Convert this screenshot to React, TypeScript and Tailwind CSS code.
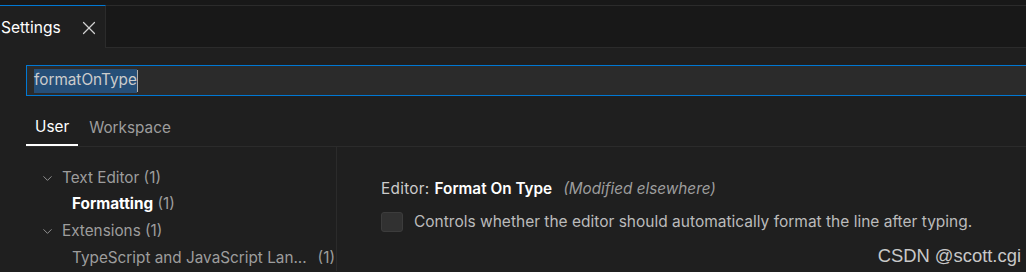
import { ChevronDown, X } from "lucide-react";

const font = { fontFamily: "Inter, 'Noto Sans', sans-serif" };

function TocRow({
  label,
  count,
  level,
  bold,
}: {
  label: string;
  count: string;
  level: number;
  bold?: boolean;
}) {
  return (
    <div className="flex h-[26.6px] items-center pr-[1px] text-[15.3px] text-[#9d9d9d]">
      {level === 0 ? (
        <>
          <ChevronDown className="ml-[14px] mr-[7px] h-[15px] w-[15px] text-[#a0a0a0]" strokeWidth={1.4} />
          <span>
            {label} {count}
          </span>
        </>
      ) : (
        <span className="ml-[46px] flex flex-1 items-center">
          {bold ? (
            <span>
              <span className="font-bold text-white">{label}</span> {count}
            </span>
          ) : (
            <>
              <span className="flex-1">{label}</span>
              <span>{count}</span>
            </>
          )}
        </span>
      )}
    </div>
  );
}

export default function App() {
  return (
    <div className="relative h-[272px] w-[1026px] overflow-hidden bg-[#1f1f1f] text-[#cccccc]" style={font}>
      {/* title strip */}
      <div className="h-[5px] bg-[#181818]" />

      {/* editor tabs */}
      <div className="flex h-[43px] bg-[#181818]">
        <div className="flex w-[106px] items-center border-t border-r border-[#2b2b2b] border-t-[#0078d4] bg-[#1f1f1f] pt-[2px] text-[15.6px] text-white">
          <span className="ml-[1px]">Settings</span>
          <X className="ml-[17px] h-[22px] w-[22px] text-[#d0d0d0]" strokeWidth={1.3} />
        </div>
        <div className="flex-1 border-t border-b border-[#2b2b2b]" />
      </div>

      <div className="pl-[26px]">
        {/* search */}
        <div className="mt-[17px] flex h-[31px] items-center border-y border-l border-[#0078d4] bg-[#2b2b2b] pl-[7px] text-[15.3px]">
          <span className="flex h-[24px] items-center bg-[#264f78] text-[#cccccc]">formatOnType</span>
          <span className="h-[22px] w-[1px] bg-[#aeafad]" />
        </div>

        {/* scope tabs */}
        <div className="mt-[14px] flex h-[37px] border-b border-[#2b2b2b] text-[15.3px]">
          <div className="flex items-center border-b-2 border-white px-[9px] pt-[1px] text-white">User</div>
          <div className="ml-[2px] flex items-center px-[9px] pt-[1px] text-[#9d9d9d]">Workspace</div>
        </div>

        <div className="flex">
          {/* table of contents */}
          <div className="w-[311px] border-r border-[#2b2b2b] pt-[18px]">
            <TocRow label="Text Editor" count="(1)" level={0} />
            <TocRow label="Formatting" count="(1)" level={1} bold />
            <TocRow label="Extensions" count="(1)" level={0} />
            <TocRow label="TypeScript and JavaScript Lan..." count="(1)" level={1} />
          </div>

          {/* setting */}
          <div className="pl-[44px] pt-[31px] text-[15.3px]">
            <div className="flex items-center">
              <span className="tracking-[0.3px] text-[#cccccc]">Editor:</span>
              <span className="ml-[5px] font-semibold text-white">Format On Type</span>
              <span className="ml-[11px] italic text-[#9d9d9d]">(Modified elsewhere)</span>
            </div>
            <div className="mt-[9px] flex items-center">
              <div className="h-[20px] w-[22px] rounded-[3px] border border-[#3c3c3c] bg-[#313131]" />
              <span className="ml-[11px] text-[15.5px] text-[#bbbbbb]">
                Controls whether the editor should automatically format the line after typing.
              </span>
            </div>
          </div>
        </div>
      </div>

      {/* watermark */}
      <div
        className="absolute bottom-[7px] right-[5px] text-[18.4px] leading-none text-[#c8c8c8]"
        style={{ fontFamily: "'Liberation Sans', Arial, sans-serif" }}
      >
        CSDN @scott.cgi
      </div>
    </div>
  );
}
